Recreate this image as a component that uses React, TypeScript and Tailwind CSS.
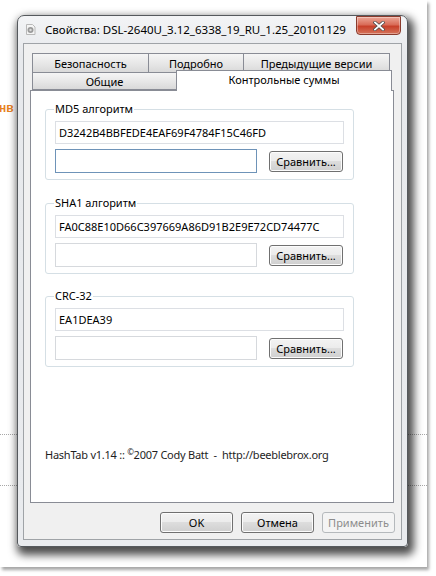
import React from "react";

const ui = "font-['Noto_Sans',sans-serif] text-[11px] text-black";

const Btn: React.FC<{ label: string; disabled?: boolean; className?: string }> = ({ label, disabled, className = "" }) => (
  <div
    className={`flex h-[21px] w-[73px] items-center justify-center rounded-[3px] border leading-none ${
      disabled
        ? "border-[#b5b9bc] bg-[#f4f4f4] text-[#8d8d8d]"
        : "border-[#707070] bg-[linear-gradient(#f3f3f3,#ececec_45%,#dddddd_50%,#cfcfcf)] text-black shadow-[inset_0_0_0_1px_#fcfcfc]"
    } ${className}`}
  >
    {label}
  </div>
);

const HashGroup: React.FC<{ title: string; hash: string; focused?: boolean; className?: string }> = ({
  title,
  hash,
  focused,
  className = "",
}) => (
  <div className={`relative h-[71px] w-[309px] rounded-[3px] border border-[#d5dfe5] px-[9px] pt-[11px] ${className}`}>
    <span className="absolute left-[8px] top-[-9px] bg-white px-[1px] leading-[16px]">{title}</span>
    <div className="flex h-[23px] w-[289px] items-center border border-[#dcdfe4] bg-white pl-[3px] leading-none">{hash}</div>
    <div className="mt-[5px] flex w-[289px] items-center justify-between">
      <div className={`h-[24px] w-[202px] border bg-white ${focused ? "border-[#6e93b8]" : "border-[#d6d9dd]"}`} />
      <Btn label="Сравнить..." className="mr-px w-[74px]" />
    </div>
  </div>
);

const Tab: React.FC<{ label: string; className?: string }> = ({ label, className = "" }) => (
  <div
    className={`flex items-center justify-center border border-[#898c95] bg-[linear-gradient(#f5f5f5,#e8e8e8_50%,#d9d9d9)] leading-none ${className}`}
  >
    {label}
  </div>
);

export default function App() {
  return (
    <div className={`relative h-[576px] w-[436px] bg-white ${ui}`}>
      <div className="relative h-[567px] w-[427px] overflow-hidden bg-white shadow-[2px_3px_3px_rgba(0,0,0,0.35)]">
        {/* page behind the dialog */}
        <span className="absolute left-[-1px] top-[99px] font-['Liberation_Sans',sans-serif] text-[12px] font-bold text-[#e8821f]">
          нв
        </span>
        <div className="absolute left-0 top-[434px] w-full border-t border-dotted border-[#a8a8a8]" />
        <div className="absolute left-0 top-[485px] w-full border-t border-dotted border-[#a8a8a8]" />

        {/* dialog */}
        <div className="relative ml-[17px] mt-[15px] flex h-[532px] w-[391px] flex-col rounded-t-[7px] rounded-b-[4px] border border-[#55595d] bg-[linear-gradient(#f3f4f6,#e7e9ec_40px,#e9ebee)] shadow-[3px_5px_9px_3px_rgba(0,0,0,0.7)]">
          <div className="flex h-[27px] shrink-0 items-center">
            <svg className="ml-[7px] h-[11px] w-[11px]" viewBox="0 0 11 11">
              <path d="M1.5 0.5h6l2.5 2.5v7.5h-8.5z" fill="#f4f4f4" stroke="#b9b9b9" />
              <circle cx="5.5" cy="6" r="3" fill="#9a9a9a" />
              <circle cx="5.5" cy="6" r="1.2" fill="#dcdcdc" />
            </svg>
            <span className="ml-[9px] whitespace-pre text-[11.5px] leading-none">Свойства: DSL-2640U_3.12_6338_19_RU_1.25_20101129</span>
            <div className="ml-auto mr-[6px] -mt-[8px] flex h-[19px] w-[45px] items-center justify-center rounded-b-[4px] border border-[#8a3a2c] bg-[linear-gradient(#eca797,#d96c58_45%,#c8402a_55%,#d5745b)] shadow-[inset_0_0_0_1px_rgba(255,255,255,0.35)]">
              <svg className="h-[10px] w-[12px]" viewBox="0 0 12 10">
                <path d="M2 1.5l8 7M10 1.5l-8 7" stroke="#4a4a4a" strokeWidth="3.2" strokeLinecap="square" />
                <path d="M2 1.5l8 7M10 1.5l-8 7" stroke="#ffffff" strokeWidth="1.8" strokeLinecap="square" />
              </svg>
            </div>
          </div>

          <div className="mx-[5px] flex h-[497px] flex-col border border-[#9fa3a7] bg-[#f0f0f0] pt-[9px]">
            {/* tabs */}
            <div className="ml-[8px] flex h-[19px]">
              <Tab label="Безопасность" className="w-[117px] border-b-0" />
              <Tab label="Подробно" className="-ml-px w-[96px] border-b-0" />
              <Tab label="Предыдущие версии" className="-ml-px w-[147px] border-b-0" />
            </div>
            <div className="relative z-10 ml-[8px] flex h-[18px] items-end">
              <Tab label="Общие" className="h-[18px] w-[145px] pt-[1px]" />
              <div className="-mb-px -ml-px flex h-[21px] w-[216px] items-start justify-center border border-b-0 border-[#898c95] bg-white pt-[3px] leading-none">
                Контрольные суммы
              </div>
            </div>

            {/* tab page */}
            <div className="ml-[6px] flex h-[413px] w-[364px] flex-col border border-[#898c95] bg-white pl-[14px] pt-[18px]">
              <HashGroup title="MD5 алгоритм" hash="D3242B4BBFEDE4EAF69F4784F15C46FD" focused />
              <HashGroup title="SHA1 алгоритм" hash="FA0C88E10D66C397669A86D91B2E9E72CD74477C" className="mt-[23px]" />
              <HashGroup title="CRC-32" hash="EA1DEA39" className="mt-[22px]" />
              <p className="mt-[80px] whitespace-pre leading-[15px] tracking-[-0.25px] text-[#1e1e1e]">
                {"HashTab v1.14 :: "}
                <sup className="text-[8px]">©</sup>
                {"2007 Cody Batt  -  http://beeblebrox.org"}
              </p>
            </div>

            <div className="mr-[6px] mt-[9px] flex justify-end gap-2">
              <Btn label="OK" />
              <Btn label="Отмена" />
              <Btn label="Применить" disabled />
            </div>
          </div>
        </div>
      </div>
    </div>
  );
}
